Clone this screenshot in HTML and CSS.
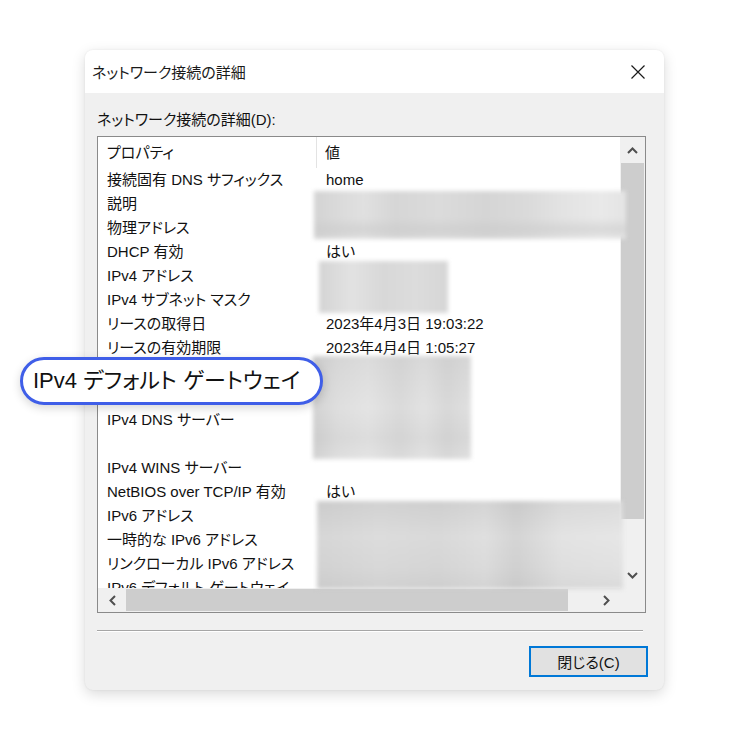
FILE: index.html
```html
<!DOCTYPE html>
<html lang="ja">
<head>
<meta charset="utf-8">
<title>ネットワーク接続の詳細</title>
<link rel="stylesheet" href="styles.css">
</head>
<body>
<div class="page">
  <div class="dialog">
    <div class="titlebar">
      <span class="title">ネットワーク接続の詳細</span>
      <span class="close" aria-label="閉じる">
        <svg width="16" height="16" viewBox="0 0 16 16"><path d="M1.5 1.5 L14.5 14.5 M14.5 1.5 L1.5 14.5" stroke="#1a1a1a" stroke-width="1.2" fill="none"/></svg>
      </span>
    </div>
    <div class="body">
      <div class="label">ネットワーク接続の詳細(D):</div>
      <div class="listbox">
        <div class="view">
          <div class="row header"><div class="c1">プロパティ</div><div class="c2">値</div></div>
          <div class="row"><div class="c1">接続固有 DNS サフィックス</div><div class="c2">home</div></div>
          <div class="row"><div class="c1">説明</div><div class="c2"></div></div>
          <div class="row"><div class="c1">物理アドレス</div><div class="c2"></div></div>
          <div class="row"><div class="c1">DHCP 有効</div><div class="c2">はい</div></div>
          <div class="row"><div class="c1">IPv4 アドレス</div><div class="c2"></div></div>
          <div class="row"><div class="c1">IPv4 サブネット マスク</div><div class="c2"></div></div>
          <div class="row"><div class="c1">リースの取得日</div><div class="c2">2023年4月3日 19:03:22</div></div>
          <div class="row"><div class="c1">リースの有効期限</div><div class="c2">2023年4月4日 1:05:27</div></div>
          <div class="row"><div class="c1">IPv4 デフォルト ゲートウェイ</div><div class="c2"></div></div>
          <div class="row"><div class="c1"></div><div class="c2"></div></div>
          <div class="row"><div class="c1">IPv4 DNS サーバー</div><div class="c2"></div></div>
          <div class="row"><div class="c1"></div><div class="c2"></div></div>
          <div class="row"><div class="c1">IPv4 WINS サーバー</div><div class="c2"></div></div>
          <div class="row"><div class="c1">NetBIOS over TCP/IP 有効</div><div class="c2">はい</div></div>
          <div class="row"><div class="c1">IPv6 アドレス</div><div class="c2"></div></div>
          <div class="row"><div class="c1">一時的な IPv6 アドレス</div><div class="c2"></div></div>
          <div class="row"><div class="c1">リンクローカル IPv6 アドレス</div><div class="c2"></div></div>
          <div class="row"><div class="c1">IPv6 デフォルト ゲートウェイ</div><div class="c2"></div></div>
        </div>
        <div class="vscroll">
          <div class="sbtn">
            <svg width="11" height="7" viewBox="0 0 11 7"><path d="M1 6 L5.5 1.5 L10 6" stroke="#4f4f4f" stroke-width="2" fill="none"/></svg>
          </div>
          <div class="vthumb"></div>
          <div class="vtrack"></div>
          <div class="sbtn">
            <svg width="11" height="7" viewBox="0 0 11 7"><path d="M1 1 L5.5 5.5 L10 1" stroke="#4f4f4f" stroke-width="2" fill="none"/></svg>
          </div>
        </div>
        <div class="hscroll">
          <div class="hbtn">
            <svg width="7" height="11" viewBox="0 0 7 11"><path d="M6 1 L1.5 5.5 L6 10" stroke="#4f4f4f" stroke-width="2" fill="none"/></svg>
          </div>
          <div class="hthumb"></div>
          <div class="htrack"></div>
          <div class="hbtn">
            <svg width="7" height="11" viewBox="0 0 7 11"><path d="M1 1 L5.5 5.5 L1 10" stroke="#4f4f4f" stroke-width="2" fill="none"/></svg>
          </div>
        </div>
        <div class="corner"></div>
        <div class="redact r1"></div>
        <div class="redact r2"></div>
        <div class="redact r3"></div>
        <div class="redact r4"></div>
      </div>
      <div class="sep"></div>
      <div class="actions">
        <button class="btn">閉じる(C)</button>
      </div>
    </div>
  </div>
  <div class="callout">IPv4 デフォルト ゲートウェイ</div>
</div>
</body>
</html>
```

FILE: styles.css
```css
html, body {
  margin: 0;
  padding: 0;
  background: #ffffff;
}

body {
  font-family: "Liberation Sans", "Noto Sans CJK JP", sans-serif;
  font-size: 15px;
  color: #111;
}

.page {
  position: relative;
  width: 750px;
  height: 750px;
  padding: 50px 0 0 85px;
  box-sizing: border-box;
}

.dialog {
  width: 579px;
  height: 640px;
  border-radius: 8px;
  overflow: hidden;
  background: #f0f0f0;
  box-shadow: 0 4px 14px rgba(0, 0, 0, 0.15), 0 0 2px rgba(0, 0, 0, 0.08);
  display: flex;
  flex-direction: column;
}

.titlebar {
  height: 43px;
  background: #ffffff;
  display: flex;
  align-items: center;
  justify-content: space-between;
  padding: 0 18px 0 7px;
  flex: none;
}

.title {
  font-size: 15px;
  color: #1a1a1a;
  font-feature-settings: "palt";
}

.close {
  display: flex;
  width: 16px;
  height: 16px;
}

.body {
  flex: 1;
  display: flex;
  flex-direction: column;
  padding: 17px 18px 0 12px;
}

.label {
  line-height: 20px;
  height: 20px;
  margin-bottom: 6px;
  font-feature-settings: "palt";
}

.listbox {
  position: relative;
  width: 549px;
  height: 477px;
  box-sizing: border-box;
  border: 1px solid #8a8a8a;
  background: #ffffff;
  display: grid;
  grid-template-columns: 522px 25px;
  grid-template-rows: 451px 24px;
}

.view {
  overflow: hidden;
}

.row {
  display: flex;
  height: 24px;
  line-height: 24px;
  white-space: nowrap;
  font-feature-settings: "palt";
}

.row.header {
  height: 31px;
  line-height: 31px;
}

.c1 {
  width: 219px;
  padding-left: 9px;
  box-sizing: border-box;
  flex: none;
  overflow: hidden;
}

.c2 {
  flex: 1;
  padding-left: 9px;
}

.header .c1 {
  border-right: 1px solid #e3e3e3;
}

.header .c2 {
  padding-left: 8px;
}

.vscroll {
  background: #f0f0f0;
  display: flex;
  flex-direction: column;
}

.sbtn {
  height: 26px;
  display: flex;
  align-items: center;
  justify-content: center;
  flex: none;
}

.vthumb {
  height: 356px;
  margin: 0 1px;
  background: #cdcdcd;
  flex: none;
}

.vtrack {
  flex: 1;
}

.hscroll {
  background: #f0f0f0;
  display: flex;
}

.hbtn {
  width: 28px;
  display: flex;
  align-items: center;
  justify-content: center;
  flex: none;
}

.hthumb {
  width: 442px;
  margin: 1px 0;
  background: #cdcdcd;
  flex: none;
}

.htrack {
  flex: 1;
}

.corner {
  background: #f0f0f0;
}

.redact {
  position: absolute;
  filter: blur(2px);
}

.r1 {
  left: 216px;
  top: 54px;
  width: 312px;
  height: 48px;
  background:
    linear-gradient(180deg, rgba(255,255,255,0) 55%, rgba(200,200,200,0.5) 80%, rgba(255,255,255,0) 100%),
    linear-gradient(90deg, #d3d3d3 0%, #dcdcdc 10%, #e0e0e0 16%, #d6d6d6 26%, #dbdbdb 40%, #d5d5d5 55%, #dadada 68%, #e3e3e3 80%, #e9e9e9 92%, #e4e4e4 100%);
}

.r2 {
  left: 221px;
  top: 124px;
  width: 129px;
  height: 52px;
  background: linear-gradient(90deg, #d4d4d4 0%, #e2e2e2 25%, #d8d8d8 50%, #dcdcdc 75%, #d6d6d6 100%);
}

.r3 {
  left: 215px;
  top: 219px;
  width: 158px;
  height: 103px;
  background:
    linear-gradient(180deg, rgba(0,0,0,0.04) 0%, rgba(0,0,0,0) 50%, rgba(0,0,0,0.03) 80%, rgba(0,0,0,0) 100%),
    linear-gradient(90deg, #d2d2d2 0%, #dedede 15%, #e4e4e4 35%, #dadada 55%, #e2e2e2 70%, #d8d8d8 85%, #e0e0e0 100%);
}

.r4 {
  left: 219px;
  top: 364px;
  width: 306px;
  height: 88px;
  background:
    linear-gradient(180deg, rgba(0,0,0,0.05) 0%, rgba(0,0,0,0) 40%, rgba(0,0,0,0.02) 75%, rgba(0,0,0,0.05) 100%),
    linear-gradient(90deg, #d6d6d6 0%, #dcdcdc 20%, #d9d9d9 40%, #dfdfdf 55%, #d4d4d4 65%, #e3e3e3 80%, #e6e6e6 100%);
}

.sep {
  height: 0;
  margin: 17px 3px 0 0;
  border-top: 1px solid #a6a6a6;
  border-bottom: 1px solid #ffffff;
}

.actions {
  display: flex;
  justify-content: flex-end;
  margin-top: 14px;
  margin-right: -2px;
}

.btn {
  width: 119px;
  height: 31px;
  box-sizing: border-box;
  border: 2px solid #0078d7;
  background: #e1e1e1;
  font-family: "Liberation Sans", "Noto Sans CJK JP", sans-serif;
  font-size: 15px;
  color: #111;
  padding: 0;
  font-feature-settings: "palt";
}

.callout {
  position: absolute;
  left: 20px;
  top: 357px;
  width: 303px;
  height: 48px;
  box-sizing: border-box;
  border: 3px solid #3f5ee8;
  border-radius: 24px;
  background: #ffffff;
  box-shadow: 0 3px 10px rgba(0, 0, 0, 0.16);
  font-size: 22px;
  line-height: 42px;
  padding-left: 10px;
  color: #111;
  white-space: nowrap;
  font-feature-settings: "palt";
}
```
